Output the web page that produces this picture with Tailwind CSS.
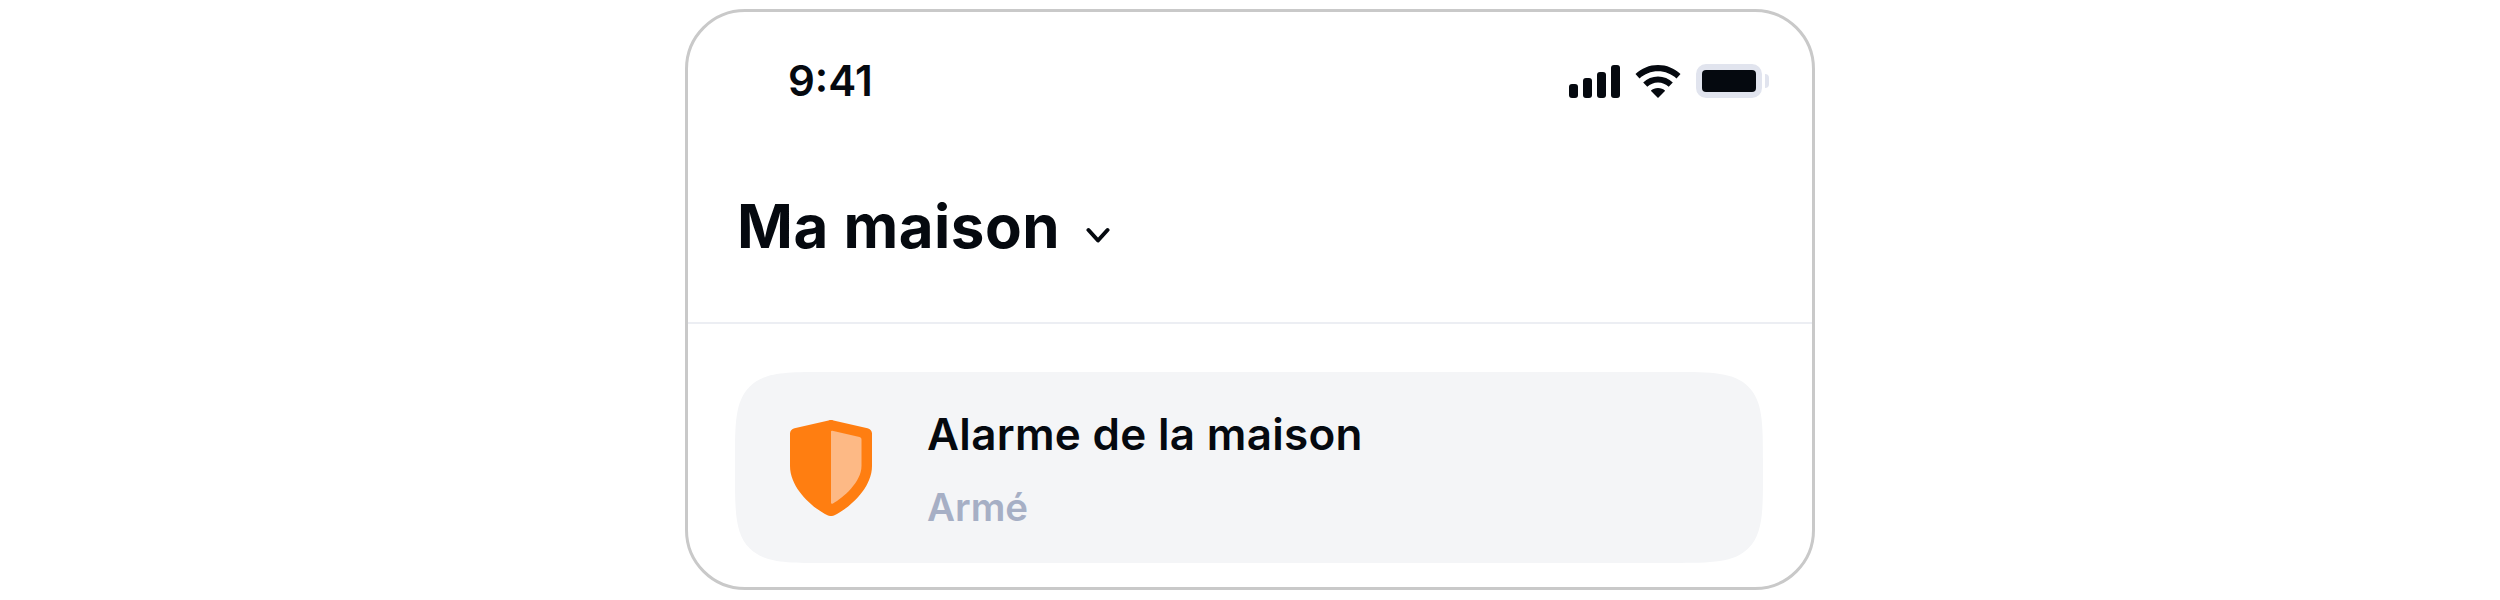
<!DOCTYPE html>
<html lang="fr">
<head>
  <meta charset="UTF-8">
  <title>Ma maison</title>
  <script src="https://cdn.jsdelivr.net/npm/@tailwindcss/browser@4"></script>
</head>
<body class="bg-white h-[600px] overflow-hidden font-['Inter',sans-serif] text-[#05090f]">
  <div class="w-[1130px] h-[581px] mt-[9px] mx-auto border-[3px] border-[#c9c9c9] rounded-[60px] flex flex-col overflow-hidden">

    <!-- Status bar -->
    <div class="h-[138px] shrink-0 flex items-center justify-between pl-[100px] pr-[43px]">
      <span class="text-[42px] leading-none font-semibold">9:41</span>
      <div class="flex items-center">
        <svg width="52" height="33" viewBox="0 0 52 33" fill="#05090f">
          <rect x="0" y="19" width="9" height="14" rx="3"/>
          <rect x="14" y="13" width="9" height="20" rx="3"/>
          <rect x="28" y="7" width="9" height="26" rx="3"/>
          <rect x="42" y="0" width="9" height="33" rx="3"/>
        </svg>
        <svg class="ml-[14px]" width="46" height="33" viewBox="0 0 46 33" fill="#05090f">
          <path d="M23 0C14.300 0 6.500 3.400 0.500 9L4.500 13.500C9.500 9 16 6.300 23 6.300C30 6.300 36.500 9 41.500 13.500L45.500 9C39.500 3.400 31.700 0 23 0Z"/>
          <path d="M23 11.500C17.300 11.500 12.100 13.700 8.200 17.400L12.300 21.800C15.100 19.200 18.900 17.600 23 17.600C27.100 17.600 30.900 19.200 33.700 21.800L37.800 17.400C33.900 13.700 28.700 11.500 23 11.500Z"/>
          <path d="M23 23C20.200 23 17.700 24 15.800 25.800L23 33L30.200 25.800C28.300 24 25.800 23 23 23Z"/>
        </svg>
        <div class="ml-[15px] w-[66px] h-[34px] border-[6px] border-[#e1e4ee] rounded-[10px]">
          <div class="w-full h-full bg-[#05090f] rounded-[4px]"></div>
        </div>
        <div class="ml-[3px] w-[4px] h-[14px] bg-[#e1e4ee] rounded-r-[4px]"></div>
      </div>
    </div>

    <!-- Header -->
    <div class="h-[174px] shrink-0 flex items-center pl-[49px] pb-[21px] border-b-2 border-[#eceef3]">
      <h1 class="text-[60px] leading-none font-bold tracking-[0.5px]">Ma maison</h1>
      <svg class="ml-[26px] mt-[19px]" width="24" height="17" viewBox="0 0 24 17" fill="none" stroke="#05090f" stroke-width="4" stroke-linecap="round" stroke-linejoin="round">
        <path d="M2.500 3L12 13.500L21.500 3"/>
      </svg>
    </div>

    <!-- Alarm card -->
    <div class="mt-[48px] ml-[47px] mr-[49px] h-[191px] shrink-0 bg-[#f4f5f7] rounded-[92px] [corner-shape:squircle] flex items-center pl-[55px]">
      <svg width="82" height="96" viewBox="0 0 82 96">
        <path fill="#ff7e11" d="M38.500 .4C40 0 42 0 43.500 .4L77.500 8.200C80.300 8.900 82 10.800 82 13.500V46C82 70 56 90 44.500 95.300C42 96.300 40 96.300 37.500 95.300C26 90 0 70 0 46V13.500C0 10.800 1.700 8.900 4.500 8.200Z"/>
        <path fill="#fdb985" d="M41 11.500C41 11 41.500 10.600 42.300 10.800L69.500 17C71 17.400 71.500 18.300 71.500 19.600V46C71.500 62 53 78 43 83.500C41.800 84.100 41 83.500 41 82.500Z"/>
      </svg>
      <div class="ml-[55px] flex flex-col pt-[1px]">
        <span class="text-[44px] leading-[54px] font-semibold tracking-[0.3px]">Alarme de la maison</span>
        <span class="mt-[23px] text-[38.5px] leading-[46px] font-semibold text-[#a6afc5]">Armé</span>
      </div>
    </div>
  </div>
</body>
</html>
